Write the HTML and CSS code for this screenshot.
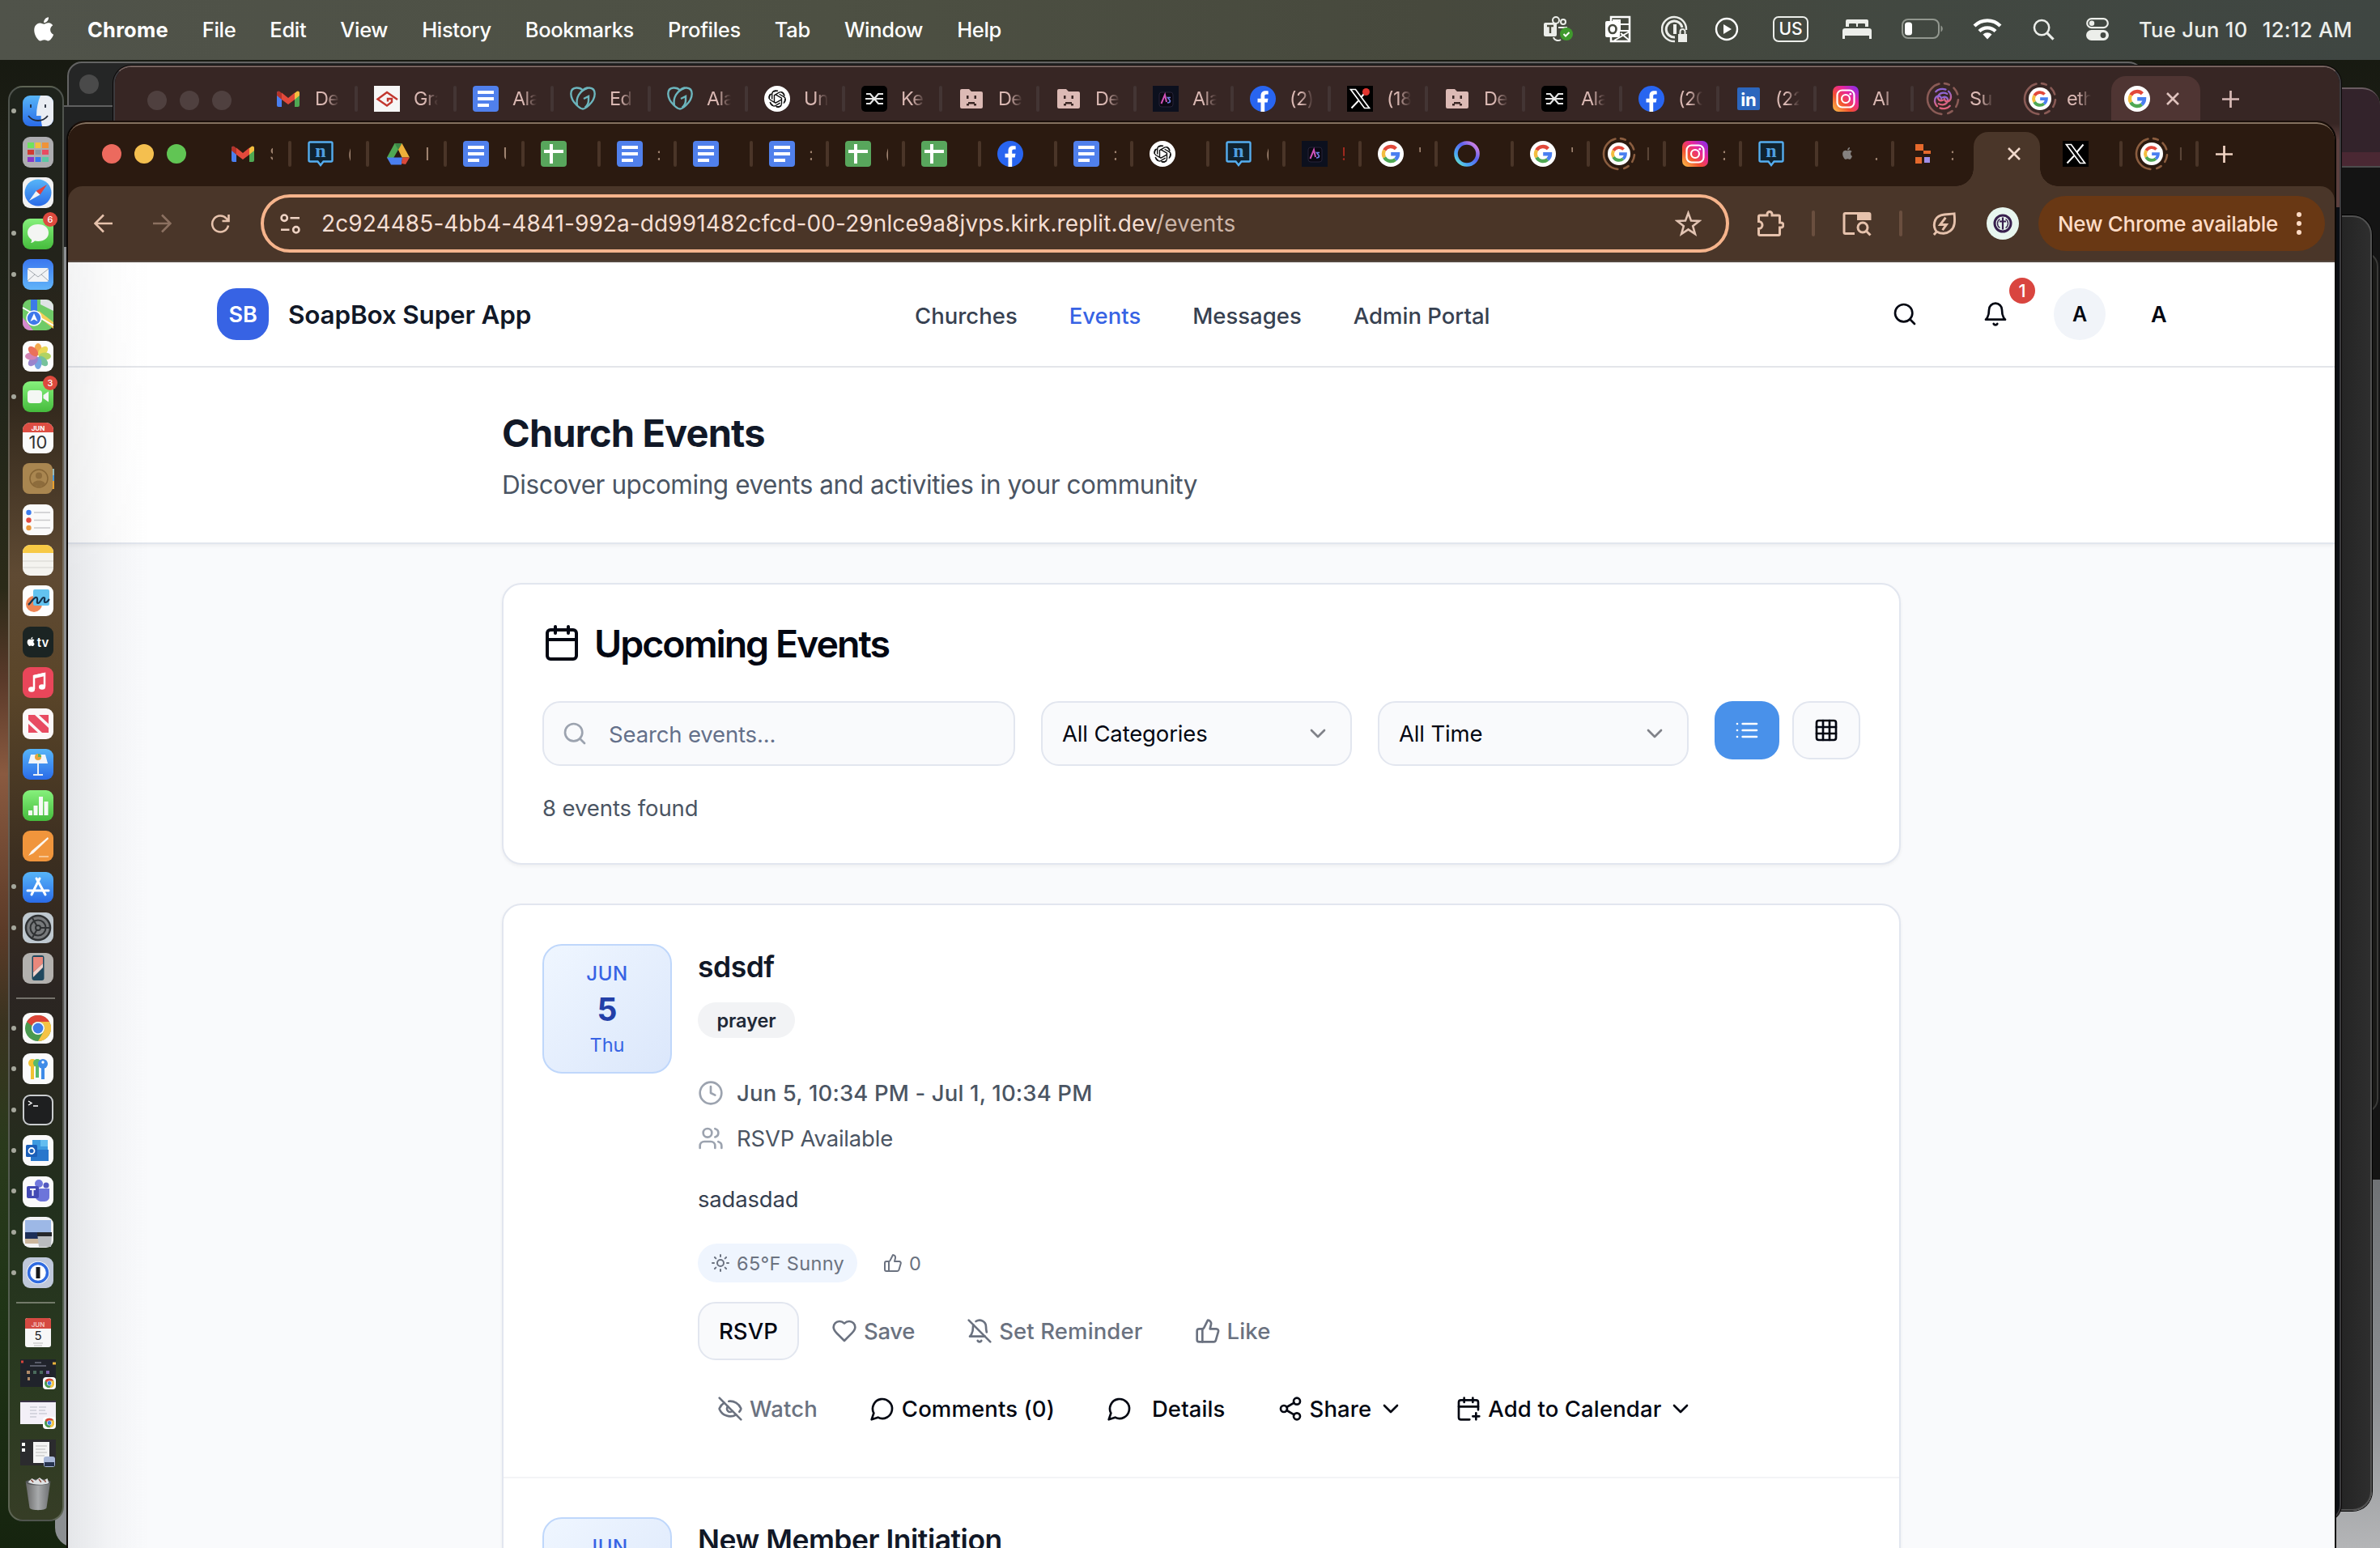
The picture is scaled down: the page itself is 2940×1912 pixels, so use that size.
FILE: index.html
```html
<!DOCTYPE html>
<html lang="en">
<head>
<meta charset="utf-8">
<title>Church Events</title>
<link rel="stylesheet" href="styles.css">
</head>
<body>
<svg class="defs" width="0" height="0">
  <defs>
    <linearGradient id="gInsta" x1="0" y1="1" x2="1" y2="0"><stop offset="0" stop-color="#fdc84b"/><stop offset=".35" stop-color="#f2502f"/><stop offset=".65" stop-color="#e8259c"/><stop offset="1" stop-color="#7b2ff7"/></linearGradient>
    <linearGradient id="gRing" x1="1" y1="0" x2="0" y2="1"><stop offset="0" stop-color="#f58be0"/><stop offset=".4" stop-color="#5a62f0"/><stop offset=".75" stop-color="#4aa8f5"/><stop offset="1" stop-color="#6ff0c0"/></linearGradient>
    <linearGradient id="gSpiral" x1="0" y1="0" x2="0" y2="1"><stop offset="0" stop-color="#8c66d8"/><stop offset="1" stop-color="#e0637a"/></linearGradient>
    <linearGradient id="gGreen" x1="0" y1="0" x2="0" y2="1"><stop offset="0" stop-color="#86f17c"/><stop offset="1" stop-color="#45bb3c"/></linearGradient>
    <linearGradient id="gBlue" x1="0" y1="0" x2="0" y2="1"><stop offset="0" stop-color="#57b5f8"/><stop offset="1" stop-color="#2a6be8"/></linearGradient>
    <linearGradient id="gMail" x1="0" y1="0" x2="0" y2="1"><stop offset="0" stop-color="#3a77f0"/><stop offset="1" stop-color="#62b5f9"/></linearGradient>
    <linearGradient id="gTrash" x1="0" y1="0" x2="1" y2="0"><stop offset="0" stop-color="#666"/><stop offset=".5" stop-color="#a8aaac"/><stop offset="1" stop-color="#6c6e70"/></linearGradient>
  </defs>
  <symbol id="f-gmail" viewBox="0 0 32 32"><path d="M2 7v17a2 2 0 0 0 2 2h4V13z" fill="#4a7ff0"/><path d="M30 7v17a2 2 0 0 1-2 2h-4V13z" fill="#4fa853"/><path d="M24 9l2.500-2c1.500-1.200 3.500-.5 3.500 2v3l-6 5z" fill="#f4bd3f"/><path d="M8 9L5.500 7C4 5.800 2 6.500 2 9v3l6 5z" fill="#b3342b"/><path d="M8 8.500l8 6.500 8-6.500V17l-8 6-8-6z" fill="#e2493b"/></symbol>
  <symbol id="f-nd" viewBox="0 0 32 32"><path d="M3 1.500h26a1.500 1.500 0 0 1 1.500 1.500v21a1.500 1.500 0 0 1-1.500 1.500h-9.500L16 30l-3.500-4.500H3A1.500 1.500 0 0 1 1.500 24V3A1.500 1.500 0 0 1 3 1.500z" fill="#10222e" stroke="#55aef0" stroke-width="2.400"/><text x="16" y="19.500" text-anchor="middle" font-family="Liberation Serif, serif" font-weight="700" font-size="24" fill="#4f9fe0">n</text></symbol>
  <symbol id="f-drive" viewBox="0 0 32 32"><path d="M11.500 3h9L11 19.500 6.500 27 2 20.500z" fill="#4fa853"/><path d="M11.500 3h9L16 11z" fill="#3d8746"/><path d="M20.500 3L30 20.500h-9.500L16 11z" fill="#edb03a"/><path d="M2 20.500h19l-1 9H7z" fill="#4a7ff0"/><path d="M21 20.500h9l-5 8.500-5-1z" fill="#d9493a"/></symbol>
  <symbol id="f-docs" viewBox="0 0 32 32"><rect width="32" height="32" rx="4" fill="#5080ec"/><path d="M6 6h20v4H6zM6 14h20v4H6zM6 22h14v4H6z" fill="#fff"/></symbol>
  <symbol id="f-sheets" viewBox="0 0 32 32"><rect width="32" height="32" rx="4" fill="#58a65c"/><path d="M11 4h4v24h-4zM4 11h24v4H4z" fill="#fff"/></symbol>
  <symbol id="f-fb" viewBox="0 0 32 32"><circle cx="16" cy="16" r="16" fill="#2865f0"/><path d="M13.500 32V20.500H9.500V15.800h4v-3.300c0-4.300 2.200-6.200 6.200-6.200 1.200 0 2.200.1 3 .3v4h-2.200c-1.700 0-2.300.8-2.300 2.400v2.800h4.300l-.8 4.700h-3.500V32z" fill="#fff"/></symbol>
  <symbol id="f-gpt" viewBox="0 0 32 32"><circle cx="16" cy="16" r="16" fill="#fff"/><g fill="none" stroke="#111" stroke-width="1.400"><path id="petal" d="M12.500 20.500v-8.800l6-3.500a4.300 4.300 0 0 1 6.300 4.500M16 6.500a4.300 4.300 0 0 0-6.300 3.300v6.800"/><use href="#petal" transform="rotate(120 16 16)"/><use href="#petal" transform="rotate(240 16 16)"/><circle cx="16" cy="16" r="9.800" stroke-dasharray="6 4.260"/></g></symbol>
  <symbol id="f-as" viewBox="0 0 32 32"><rect width="32" height="32" fill="#0c101e"/><rect x="8" y="8" width="17" height="18" rx="3" fill="#0a0812" stroke="#262338"/><path d="M10.500 22L15 11l2 9" fill="none" stroke="#d052b8" stroke-width="2"/><path d="M22 14.500h-3.500l3 4c0 2-1.500 2.500-3.500 2.500" fill="none" stroke="#6f7de0" stroke-width="1.600"/></symbol>
  <symbol id="f-google" viewBox="0 0 32 32"><circle cx="16" cy="16" r="16" fill="#fff"/><g fill="none" stroke-width="4.400"><path d="M22.400 9.700A9 9 0 0 0 8.200 11.500" stroke="#e2493b"/><path d="M8.200 11.500a9 9 0 0 0 0 9" stroke="#f4bd3f"/><path d="M8.200 20.500a9 9 0 0 0 13.500 2.500" stroke="#4fa853"/><path d="M21.700 23A9 9 0 0 0 25 16.200h-8.800" stroke="#4a7ff0"/></g></symbol>
  <symbol id="f-ring" viewBox="0 0 32 32"><circle cx="16" cy="16" r="13.500" fill="none" stroke="url(#gRing)" stroke-width="4.600"/></symbol>
  <symbol id="f-insta" viewBox="0 0 32 32"><rect width="32" height="32" rx="7" fill="url(#gInsta)"/><rect x="5.500" y="5.500" width="21" height="21" rx="6" fill="none" stroke="#fff" stroke-width="2.200"/><circle cx="16" cy="16" r="5" fill="none" stroke="#fff" stroke-width="2.200"/><circle cx="21.800" cy="10.200" r="1.400" fill="#fff"/></symbol>
  <symbol id="apple" viewBox="0 0 24 24"><path d="M17.050 12.540c-.03-2.600 2.130-3.860 2.230-3.920-1.220-1.780-3.110-2.020-3.780-2.050-1.600-.16-3.140.95-3.950.95-.82 0-2.070-.93-3.410-.9-1.750.02-3.370 1.020-4.270 2.590-1.830 3.160-.47 7.840 1.300 10.400.87 1.260 1.900 2.670 3.260 2.620 1.310-.05 1.800-.85 3.390-.85 1.570 0 2.030.85 3.410.82 1.410-.02 2.300-1.280 3.160-2.540 1-1.460 1.410-2.870 1.430-2.940-.03-.01-2.740-1.050-2.770-4.180zM14.460 4.880c.72-.88 1.210-2.090 1.070-3.310-1.040.05-2.300.7-3.040 1.570-.67.770-1.250 2.010-1.100 3.190 1.160.09 2.350-.59 3.070-1.450z"/></symbol>
  <symbol id="f-apple" viewBox="0 0 32 32"><use href="#apple" x="8" y="7" width="17" height="17" fill="#85817f"/></symbol>
  <symbol id="f-replit" viewBox="0 0 32 32"><path d="M6 4h10v8H6zM16 12h9v4H16zM6 20h8v8H6z" fill="#e5692c"/><path d="M17 20h7v7h-7z" fill="#a08fe8"/></symbol>
  <symbol id="f-x" viewBox="0 0 32 32"><rect width="32" height="32" fill="#000"/><path d="M4.500 4.500h6L27.500 27.500h-6z" fill="none" stroke="#fff" stroke-width="1.700"/><path d="M25.500 4.500L17.500 14M14 18.500L5.500 27.500" stroke="#fff" stroke-width="2"/></symbol>
  <symbol id="f-gr" viewBox="0 0 32 32"><rect width="32" height="32" fill="#f6f6f6"/><path d="M29 17L16 8 4.500 16.500 16 24.500l6-4.500v-4h-5v3.500" fill="none" stroke="#c2372f" stroke-width="2.400"/></symbol>
  <symbol id="f-gd" viewBox="0 0 32 32"><g fill="none" stroke="#6cb5bd" stroke-width="2.400"><path d="M8.500 24C-1 15-1 3 8 2.500c5-.3 8 3 8 3s3-3.300 8-3C33 3 33 15 23.500 24c-2.500 2.400-5 4.500-7.500 4.500s-5-2.100-7.500-4.500z"/><path d="M22 2.500C12 6 7 15 9 24"/><path d="M17 16l6-3v5c0 4-2 7-4.500 9"/></g></symbol>
  <symbol id="f-ke" viewBox="0 0 32 32"><rect width="32" height="32" rx="5" fill="#000"/><path d="M6 10h5l5 6 5-6h6M6 22h5l5-6 5 6h6M5 16h22" fill="none" stroke="#e6e6e6" stroke-width="2.200"/></symbol>
  <symbol id="f-sad" viewBox="0 0 32 32"><path d="M4 4h9l3 3h12a2 2 0 0 1 2 2v17a2 2 0 0 1-2 2H4a2 2 0 0 1-2-2V6a2 2 0 0 1 2-2z" fill="#dcbab5"/><path d="M10 12h2.500v4H10zM19.500 12H22v4h-2.500zM12 20h8v2.500h-8zM10 22h3v2.500h-3zM19 22h3v2.500h-3z" fill="#3a2725"/></symbol>
  <symbol id="f-in" viewBox="0 0 32 32"><rect x="2" y="2" width="28" height="28" rx="2" fill="#2c66bd"/><text x="16" y="25" text-anchor="middle" font-family="Inter, sans-serif" font-weight="700" font-size="22" fill="#fff">in</text></symbol>
  <symbol id="f-spiral" viewBox="0 0 32 32"><g fill="none" stroke="url(#gSpiral)" stroke-width="2.600" stroke-linecap="round"><path d="M16 14c5-2 8 2 6.500 6-2 4.500-8 5.500-12.500 3"/><path d="M16 18c-5 2-8-2-6.500-6 2-4.500 8-5.500 12.500-3"/><path d="M14 16c-1-5-7-5-9 0-1 3.500.5 8 3 10.500"/><path d="M18 16c1 5 7 5 9 0 1-3.500-.5-8-3-10.500"/><path d="M12 29c5 2 11 .5 14-3M20 3c-5-2-11-.5-14 3"/></g></symbol>
  <symbol id="dashring" viewBox="0 0 42 42"><circle cx="21" cy="21" r="19" fill="none" stroke="currentColor" stroke-width="2.600" stroke-linecap="round" stroke-dasharray="6 7 9 7 9 7 6 8 53 7.400" transform="rotate(-84 21 21)"/></symbol>

  <symbol id="search" viewBox="0 0 24 24"><circle cx="11" cy="11" r="8"/><path d="m21 21-4.300-4.300"/></symbol>
  <symbol id="bell" viewBox="0 0 24 24"><path d="M6 8a6 6 0 0 1 12 0c0 7 3 9 3 9H3s3-2 3-9"/><path d="M10.300 21a1.940 1.940 0 0 0 3.400 0"/></symbol>
  <symbol id="belloff" viewBox="0 0 24 24"><path d="M8.700 3A6 6 0 0 1 18 8a21.300 21.300 0 0 0 .6 5"/><path d="M17 17H3s3-2 3-9a4.670 4.670 0 0 1 .3-1.700"/><path d="M10.300 21a1.940 1.940 0 0 0 3.400 0"/><path d="m2 2 20 20"/></symbol>
  <symbol id="calendar" viewBox="0 0 24 24"><path d="M8 2v4M16 2v4"/><rect width="18" height="18" x="3" y="4" rx="2"/><path d="M3 10h18"/></symbol>
  <symbol id="calplus" viewBox="0 0 24 24"><path d="M8 2v4M16 2v4"/><path d="M21 13V6a2 2 0 0 0-2-2H5a2 2 0 0 0-2 2v14a2 2 0 0 0 2 2h8"/><path d="M3 10h18M16 19h6M19 16v6"/></symbol>
  <symbol id="chev" viewBox="0 0 24 24"><path d="m6 9 6 6 6-6"/></symbol>
  <symbol id="list" viewBox="0 0 24 24"><path d="M3 12h.01M3 18h.01M3 6h.01M8 12h13M8 18h13M8 6h13"/></symbol>
  <symbol id="grid" viewBox="0 0 24 24"><rect width="18" height="18" x="3" y="3" rx="2"/><path d="M3 9h18M3 15h18M9 3v18M15 3v18"/></symbol>
  <symbol id="clock" viewBox="0 0 24 24"><circle cx="12" cy="12" r="10"/><path d="M12 6v6l4 2"/></symbol>
  <symbol id="users" viewBox="0 0 24 24"><path d="M16 21v-2a4 4 0 0 0-4-4H6a4 4 0 0 0-4 4v2"/><circle cx="9" cy="7" r="4"/><path d="M22 21v-2a4 4 0 0 0-3-3.870M16 3.130a4 4 0 0 1 0 7.750"/></symbol>
  <symbol id="sun" viewBox="0 0 24 24"><circle cx="12" cy="12" r="4"/><path d="M12 2v2M12 20v2m-7.070-17.070 1.410 1.410m11.320 11.320 1.410 1.410M2 12h2M20 12h2m-15.660 5.660-1.410 1.410M19.070 4.930l-1.410 1.410"/></symbol>
  <symbol id="thumb" viewBox="0 0 24 24"><path d="M7 10v12"/><path d="M15 5.880 14 10h5.830a2 2 0 0 1 1.920 2.560l-2.330 8A2 2 0 0 1 17.500 22H4a2 2 0 0 1-2-2v-8a2 2 0 0 1 2-2h2.760a2 2 0 0 0 1.790-1.110L12 2a3.130 3.130 0 0 1 3 3.880Z"/></symbol>
  <symbol id="heart" viewBox="0 0 24 24"><path d="M19 14c1.490-1.460 3-3.210 3-5.500A5.500 5.500 0 0 0 16.500 3c-1.760 0-3 .5-4.500 2-1.500-1.500-2.740-2-4.500-2A5.500 5.500 0 0 0 2 8.500c0 2.300 1.500 4.050 3 5.500l7 7Z"/></symbol>
  <symbol id="eyeoff" viewBox="0 0 24 24"><path d="M10.733 5.076a10.744 10.744 0 0 1 11.205 6.575 1 1 0 0 1 0 .696 10.747 10.747 0 0 1-1.444 2.490"/><path d="M14.084 14.158a3 3 0 0 1-4.242-4.242"/><path d="M17.479 17.499a10.750 10.750 0 0 1-15.417-5.151 1 1 0 0 1 0-.696 10.750 10.750 0 0 1 4.446-5.143"/><path d="m2 2 20 20"/></symbol>
  <symbol id="comment" viewBox="0 0 24 24"><path d="M7.900 20A9 9 0 1 0 4 16.100L2 22Z"/></symbol>
  <symbol id="share" viewBox="0 0 24 24"><circle cx="18" cy="5" r="3"/><circle cx="6" cy="12" r="3"/><circle cx="18" cy="19" r="3"/><path d="m8.590 13.510 6.830 3.980M15.410 6.510l-6.820 3.980"/></symbol>
  <symbol id="chromelogo" viewBox="0 0 32 32"><circle cx="16" cy="16" r="16" fill="#4a9a50"/><path d="M2.100 8a16 16 0 0 1 27.800 0H16a8 8 0 0 0-7.500 5z" fill="#dc4437"/><path d="M29.900 8A16 16 0 0 1 16 32l7-12a8 8 0 0 0-7-12z" fill="#f6c344"/><circle cx="16" cy="16" r="8" fill="#fff"/><circle cx="16" cy="16" r="6.400" fill="#3f7de8"/></symbol>
</svg>

<div class="desktop">
  <!-- windows stacked behind the active one -->
  <div class="win w-plum"><i></i></div>
  <div class="win w-black"></div>
  <div class="win w-silver"></div>
  <div class="win w-edge"></div>
  <div class="win w-char"></div>
  <div class="win w-grayleft"></div>
  <div class="win w-dark1"><i class="dim"></i></div>
  <div class="win w-dark2"></div>

  <div class="win back">
    <div class="tabstrip backstrip">
      <div class="lights dimlights"><i></i><i></i><i></i></div>
      <div class="bt wide"><svg><use href="#f-gmail"/></svg><span>De</span></div>
      <div class="bt wide"><svg><use href="#f-gr"/></svg><span>Gra</span></div>
      <div class="bt"><svg><use href="#f-docs"/></svg><span>Ala</span></div>
      <div class="bt"><svg><use href="#f-gd"/></svg><span>Ed</span></div>
      <div class="bt"><svg><use href="#f-gd"/></svg><span>Ala</span></div>
      <div class="bt"><svg><use href="#f-gpt"/></svg><span>Un</span></div>
      <div class="bt"><svg><use href="#f-ke"/></svg><span>Ke</span></div>
      <div class="bt"><svg><use href="#f-sad"/></svg><span>De</span></div>
      <div class="bt"><svg><use href="#f-sad"/></svg><span>De</span></div>
      <div class="bt"><svg><use href="#f-as"/></svg><span>Ala</span></div>
      <div class="bt"><svg><use href="#f-fb"/></svg><span>(2)</span></div>
      <div class="bt"><svg><use href="#f-x"/></svg><span>(18</span><b class="reddot"></b></div>
      <div class="bt"><svg><use href="#f-sad"/></svg><span>De</span></div>
      <div class="bt"><svg><use href="#f-ke"/></svg><span>Ala</span></div>
      <div class="bt"><svg><use href="#f-fb"/></svg><span>(20</span></div>
      <div class="bt"><svg><use href="#f-in"/></svg><span>(22</span></div>
      <div class="bt"><svg><use href="#f-insta"/></svg><span>AI</span></div>
      <div class="bt nosep"><svg class="inner"><use href="#f-spiral"/></svg><svg class="dash"><use href="#dashring"/></svg><span>Su</span></div>
      <div class="bt nosep"><svg class="inner"><use href="#f-google"/></svg><svg class="dash"><use href="#dashring"/></svg><span>eth</span></div>
      <div class="bactive"><svg class="fav"><use href="#f-google"/></svg><svg class="x" viewBox="0 0 16 16"><path d="M1 1l14 14M15 1L1 15"/></svg></div>
      <svg class="plus" viewBox="0 0 20 20"><path d="M10 0v20M0 10h20"/></svg>
    </div>
  </div>

  <div class="win front">
    <div class="tabstrip frontstrip">
      <div class="lights"><i class="r"></i><i class="y"></i><i class="g"></i></div>
      <div class="ft wide"><svg><use href="#f-gmail"/></svg><span>S</span></div>
      <div class="ft wide"><svg><use href="#f-nd"/></svg><span>(</span></div>
      <div class="ft wide"><svg><use href="#f-drive"/></svg><span>I</span></div>
      <div class="ft wide"><svg><use href="#f-docs"/></svg><span>U</span></div>
      <div class="ft"><svg><use href="#f-sheets"/></svg></div>
      <div class="ft"><svg><use href="#f-docs"/></svg><span>:</span></div>
      <div class="ft"><svg><use href="#f-docs"/></svg></div>
      <div class="ft"><svg><use href="#f-docs"/></svg><span>:</span></div>
      <div class="ft"><svg><use href="#f-sheets"/></svg><span>(</span></div>
      <div class="ft"><svg><use href="#f-sheets"/></svg></div>
      <div class="ft"><svg><use href="#f-fb"/></svg></div>
      <div class="ft"><svg><use href="#f-docs"/></svg><span>:</span></div>
      <div class="ft"><svg><use href="#f-gpt"/></svg></div>
      <div class="ft"><svg><use href="#f-nd"/></svg><span>(</span></div>
      <div class="ft"><svg><use href="#f-as"/></svg><span class="red">!</span></div>
      <div class="ft"><svg><use href="#f-google"/></svg><span>'</span></div>
      <div class="ft"><svg><use href="#f-ring"/></svg></div>
      <div class="ft"><svg><use href="#f-google"/></svg><span>'</span></div>
      <div class="ft"><svg class="inner"><use href="#f-google"/></svg><svg class="dash"><use href="#dashring"/></svg><span class="faint">I</span></div>
      <div class="ft"><svg><use href="#f-insta"/></svg><span>:</span></div>
      <div class="ft"><svg><use href="#f-nd"/></svg></div>
      <div class="ft"><svg><use href="#f-apple"/></svg><span>.</span></div>
      <div class="ft nosep"><svg><use href="#f-replit"/></svg><span>:</span></div>
      <div class="factive"><svg class="x" viewBox="0 0 16 16"><path d="M1 1l14 14M15 1L1 15"/></svg></div>
      <div class="ft"><svg><use href="#f-x"/></svg></div>
      <div class="ft"><svg class="inner"><use href="#f-google"/></svg><svg class="dash"><use href="#dashring"/></svg><span class="faint">I</span></div>
      <svg class="plus" viewBox="0 0 20 20"><path d="M10 0v20M0 10h20"/></svg>
    </div>

    <div class="toolbar">
      <div class="navbtns">
        <svg viewBox="0 0 24 24"><path d="M23 12H2M12 1.500L1.500 12 12 22.500"/></svg>
        <svg viewBox="0 0 24 24" class="off"><path d="M1 12h21M12 1.500L22.500 12 12 22.500"/></svg>
        <svg viewBox="0 0 24 24"><path d="M22 14.500a10 10 0 1 1-2.200-8.500L22 8.500M22.500 1v8h-8"/></svg>
      </div>
      <div class="omnibox">
        <svg class="tune" viewBox="0 0 24 24"><circle cx="5" cy="5" r="3.500"/><path d="M12 5h11M1 19h10"/><circle cx="19" cy="19" r="3.500"/></svg>
        <span class="url">2c924485-4bb4-4841-992a-dd991482cfcd-00-29nlce9a8jvps.kirk.replit.dev<em>/events</em></span>
        <svg class="star" viewBox="0 0 32 32"><path d="M16 3l3.400 9.200 9.800.4-7.700 6.100 2.700 9.500L16 22.700l-8.200 5.500 2.700-9.500-7.700-6.100 9.800-.4z"/></svg>
      </div>
      <div class="tools">
        <svg class="t-puz" viewBox="0 0 34 34"><path d="M4 7h9V5.500a3 3 0 0 1 6 0V7h8a1.500 1.500 0 0 1 1.500 1.500V16h1.500a3 3 0 0 1 0 6h-1.500v8a1.500 1.500 0 0 1-1.500 1.500H4A1.500 1.500 0 0 1 2.500 30v-6.500a4.500 4.500 0 0 0 0-9v-6A1.500 1.500 0 0 1 4 7z"/></svg>
        <i class="tsep"></i>
        <svg class="t-lens" viewBox="0 0 36 32"><path d="M15 28.500H3.500A1.500 1.500 0 0 1 2 27V5a1.500 1.500 0 0 1 1.500-1.500h29A1.500 1.500 0 0 1 34 5v7"/><path d="M18 3.500h15.500V12H18z" class="fill"/><circle cx="25" cy="21" r="6"/><path d="M29.500 25.500l5 5"/></svg>
        <i class="tsep"></i>
        <svg class="t-leaf" viewBox="0 0 32 32"><path d="M3 30l3.500-4C1 19 3 8 12 5c6-2 12-1 17-2 1 10 1 17-5 22-5 4-12 4-17 1"/><path d="M18 8l-7 9h8l-5 7"/></svg>
        <svg class="avatar" viewBox="0 0 40 40"><circle cx="20" cy="20" r="20" fill="#e8f6ef"/><circle cx="20" cy="20" r="10" fill="none" stroke="#38204e" stroke-width="3"/><path d="M20 12.500v15M16 17.500h8" stroke="#38204e" stroke-width="2.200"/><path d="M16.500 14.500a6.500 6.500 0 0 0 0 11M23.500 14.500a6.500 6.500 0 0 1 0 11" fill="none" stroke="#38204e" stroke-width="1.400"/></svg>
        <div class="update"><span>New Chrome available</span><i class="kebab"><b></b><b></b><b></b></i></div>
      </div>
    </div>

    <div class="page">
      <nav class="nav">
        <div class="brand"><div class="logo">SB</div><span>SoapBox Super App</span></div>
        <div class="links"><a>Churches</a><a class="on">Events</a><a>Messages</a><a>Admin Portal</a></div>
        <div class="actions">
          <svg class="ic"><use href="#search"/></svg>
          <div class="bell"><svg class="ic"><use href="#bell"/></svg><b>1</b></div>
          <div class="av">A</div>
          <div class="av2">A</div>
        </div>
      </nav>
      <header class="hero"><div class="wrap"><h1>Church Events</h1><p>Discover upcoming events and activities in your community</p></div></header>
      <main class="wrap main">
        <section class="card filter">
          <h2><svg class="ic big"><use href="#calendar"/></svg><span>Upcoming Events</span></h2>
          <div class="filters">
            <div class="input"><svg class="ic"><use href="#search"/></svg><span>Search events...</span></div>
            <div class="select"><span>All Categories</span><svg class="ic"><use href="#chev"/></svg></div>
            <div class="select"><span>All Time</span><svg class="ic"><use href="#chev"/></svg></div>
            <div class="views"><div class="vlist"><svg class="ic"><use href="#list"/></svg></div><div class="vgrid"><svg class="ic"><use href="#grid"/></svg></div></div>
          </div>
          <p class="found">8 events found</p>
        </section>
        <section class="card events">
          <article class="event">
            <div class="date"><span class="mon">JUN</span><b>5</b><span class="dow">Thu</span></div>
            <div class="body">
              <h3>sdsdf</h3>
              <span class="tag">prayer</span>
              <div class="meta time"><svg class="ic"><use href="#clock"/></svg><span>Jun 5, 10:34 PM - Jul 1, 10:34 PM</span></div>
              <div class="meta"><svg class="ic"><use href="#users"/></svg><span>RSVP Available</span></div>
              <p class="desc">sadasdad</p>
              <div class="stats"><span class="pill"><svg class="ic sm"><use href="#sun"/></svg><span>65°F Sunny</span></span><span class="likes"><svg class="ic sm"><use href="#thumb"/></svg>0</span></div>
              <div class="btns">
                <button class="outline">RSVP</button>
                <button class="mute"><svg class="ic"><use href="#heart"/></svg><span class="save">Save</span></button>
                <button class="mute"><svg class="ic"><use href="#belloff"/></svg><span>Set Reminder</span></button>
                <button class="mute"><svg class="ic"><use href="#thumb"/></svg><span>Like</span></button>
              </div>
              <div class="btns second">
                <button class="mute"><svg class="ic"><use href="#eyeoff"/></svg><span>Watch</span></button>
                <button><svg class="ic"><use href="#comment"/></svg><span>Comments (0)</span></button>
                <button class="details"><svg class="ic"><use href="#comment"/></svg><span>Details</span></button>
                <button><svg class="ic"><use href="#share"/></svg><span>Share</span><svg class="ic"><use href="#chev"/></svg></button>
                <button><svg class="ic"><use href="#calplus"/></svg><span>Add to Calendar</span><svg class="ic"><use href="#chev"/></svg></button>
              </div>
            </div>
          </article>
          <article class="event">
            <div class="date"><span class="mon">JUN</span><b>8</b><span class="dow">Sun</span></div>
            <div class="body"><h3>New Member Initiation</h3></div>
          </article>
        </section>
      </main>
      <div class="dockshade"></div>
    </div>
  </div>

  <div class="menubar">
    <svg class="apple"><use href="#apple"/></svg>
    <div class="menus"><b>Chrome</b><span>File</span><span>Edit</span><span>View</span><span>History</span><span>Bookmarks</span><span>Profiles</span><span>Tab</span><span>Window</span><span>Help</span></div>
    <div class="status">
      <svg class="s1" viewBox="0 0 36 32"><rect x="0" y="8" width="16" height="17" rx="2" fill="#eceeea"/><path d="M4 12h8M8 12v9" stroke="#4a4b3d" stroke-width="2.400"/><g fill="none" stroke="#eceeea" stroke-width="2"><circle cx="15" cy="5" r="4"/><circle cx="24" cy="7" r="3"/><path d="M18 14h10v6M12 26c1 4 6 5 9 3"/></g><circle cx="28" cy="22" r="8" fill="#3f9a2d"/><path d="M24.500 22l2.500 2.500 4.500-4.500" fill="none" stroke="#fff" stroke-width="2"/></svg>
      <svg class="s2" viewBox="0 0 34 34"><rect x="8" y="2" width="23" height="30" fill="none" stroke="#fff" stroke-width="2.500"/><path d="M10 6h9v5h12M19 11v8h12M12 31l19-11M20 22l11 9" stroke="#fff" stroke-width="2" fill="none"/><rect x="1" y="7" width="18" height="20" rx="2" fill="#fff"/><ellipse cx="10" cy="17" rx="4.500" ry="5" fill="none" stroke="#46493f" stroke-width="2.600"/></svg>
      <svg class="s3" viewBox="0 0 34 34"><g fill="none" stroke="#eceeea" stroke-width="2.400"><path d="M31 18A15 15 0 1 0 17 32"/><path d="M26 15A10 10 0 1 0 17 27" stroke-width="3"/></g><path d="M15 11h4v12h-4zM21 23h11v10H21z" fill="#eceeea"/><path d="M23.500 23v-3a3 3 0 0 1 6 0v3" fill="none" stroke="#eceeea" stroke-width="2"/></svg>
      <svg class="s4" viewBox="0 0 30 30"><circle cx="15" cy="15" r="13" fill="none" stroke="#fff" stroke-width="2.400"/><path d="M11 9l10 6-10 6z" fill="#fff"/></svg>
      <div class="us">US</div>
      <svg class="s5" viewBox="0 0 36 26"><path d="M4 10V3a2 2 0 0 1 2-2h24a2 2 0 0 1 2 2v7h-4V7a1 1 0 0 0-1-1h-7a1 1 0 0 0-1 1v3h-2V7a1 1 0 0 0-1-1H9a1 1 0 0 0-1 1v3zM3 12h30a3 3 0 0 1 3 3v10h-3v-4H3v4H0V15a3 3 0 0 1 3-3z" fill="#eceeea"/></svg>
      <svg class="s6" viewBox="0 0 52 26"><rect x="1" y="1" width="45" height="23" rx="7" fill="none" stroke="#92978f" stroke-width="2"/><rect x="4" y="4.500" width="9" height="16" rx="3.500" fill="#fff"/><path d="M48.500 8.500c3 1.500 3 6.500 0 8z" fill="#92978f"/></svg>
      <svg class="s7" viewBox="0 0 36 26"><g fill="none" stroke="#fff" stroke-width="4.200"><path d="M2 9a22.500 22.500 0 0 1 32 0"/><path d="M8 15.500a14 14 0 0 1 20 0"/></g><path d="M18 25.500l-5.500-6a8 8 0 0 1 11 0z" fill="#fff"/></svg>
      <svg class="s8" viewBox="0 0 28 28"><g fill="none" stroke="#eceeea" stroke-width="2.600"><circle cx="11.500" cy="11.500" r="9.500"/><path d="M18.500 18.500L26.500 26.500" stroke-width="3.200"/></g></svg>
      <svg class="s9" viewBox="0 0 28 28"><rect x="1.200" y="1.200" width="25.600" height="11" rx="5.500" fill="none" stroke="#eceeea" stroke-width="2.200"/><circle cx="7" cy="6.700" r="3.200" fill="#eceeea"/><rect y="15" width="28" height="13" rx="6.500" fill="#eceeea"/><circle cx="21" cy="21.500" r="3.400" fill="#434842"/></svg>
      <span class="clock"><span>Tue Jun 10</span><span>12:12 AM</span></span>
    </div>
  </div>

  <div class="dock">
    <div class="d run"><svg viewBox="0 0 38 38"><rect width="38" height="38" rx="9" fill="url(#gBlue)"/><path d="M22 0h7a9 9 0 0 1 9 9v20a9 9 0 0 1-9 9h-5c-1-5-1.500-9-1.300-13H17c0-9 2-18 5-25z" fill="#e9edf3"/><path d="M10 11v4M28 11v4M7 25c6 8 18 8 24 0" fill="none" stroke="#222a38" stroke-width="1.800"/></svg></div>
    <div class="d"><svg viewBox="0 0 38 38"><rect width="38" height="38" rx="9" fill="#adadb0"/><path d="M6 7h8v7H6z" fill="#6ee35c"/><path d="M15.500 7h7v7h-7z" fill="#f3c03d"/><path d="M24 7h8v7h-8z" fill="#ef9339"/><path d="M6 16h8v6H6z" fill="#d13b31"/><path d="M15.500 16h7v6h-7z" fill="#8b97a3"/><path d="M24 16h8v6h-8z" fill="#ea4b61"/><path d="M6 25h8v6H6z" fill="#8938c8"/><path d="M15.500 25h7v6h-7z" fill="#3377ee"/><path d="M24 25h8v6h-8z" fill="#5cc9a4"/></svg></div>
    <div class="d"><svg viewBox="0 0 38 38"><rect width="38" height="38" rx="9" fill="#f1f1f2"/><circle cx="19" cy="19" r="16.500" fill="url(#gBlue)"/><path d="M30 9L21.500 21.500 16.500 17z" fill="#e3413a"/><path d="M8 29l8.500-12 5 4.500z" fill="#f4f4f4"/></svg></div>
    <div class="d run"><svg viewBox="0 0 38 38"><rect width="38" height="38" rx="9" fill="url(#gGreen)"/><path d="M19 7c8 0 13 4.500 13 10.500S27 28 19 28c-1.500 0-3-.2-4-.5-1.500 1.500-3 2.300-5 2.500 1-1.200 1.300-2.500 1-4-3-2-5-5-5-8.500C6 11.500 11 7 19 7z" fill="#f3f5f3"/></svg><b>6</b></div>
    <div class="d run"><svg viewBox="0 0 38 38"><rect width="38" height="38" rx="9" fill="url(#gMail)"/><rect x="6" y="11" width="26" height="17" rx="2" fill="#f1f3f5"/><path d="M6 12l13 10 13-10M6 27l9-8M32 27l-9-8" fill="none" stroke="#a3a9b0"/></svg></div>
    <div class="d"><svg viewBox="0 0 38 38"><rect width="38" height="38" rx="9" fill="#6fcb68"/><path d="M22 0h7a9 9 0 0 1 9 9v5L22 6z" fill="#dfe3e5"/><path d="M0 22v7a9 9 0 0 0 9 9h4z" fill="#d689cf"/><path d="M10 0h8v18h-8z" fill="#3c7ae8"/><path d="M20 14l18 14v8L18 20z" fill="#f4d05a"/><path d="M0 10l38 22" stroke="#fff" stroke-width="2"/><circle cx="14" cy="23" r="9" fill="#3f78ea" stroke="#fff" stroke-width="1.500"/><path d="M14 17l4.500 10-4.500-2.500L9.500 27z" fill="#fff"/></svg></div>
    <div class="d"><svg viewBox="0 0 38 38"><rect width="38" height="38" rx="9" fill="#fcfcfc"/><g opacity=".85"><ellipse cx="19" cy="10.500" rx="4.500" ry="7.500" fill="#f29b2f"/><ellipse cx="19" cy="10.500" rx="4.500" ry="7.500" fill="#e8d33a" transform="rotate(45 19 19)"/><ellipse cx="19" cy="10.500" rx="4.500" ry="7.500" fill="#a4cc48" transform="rotate(90 19 19)"/><ellipse cx="19" cy="10.500" rx="4.500" ry="7.500" fill="#5fb98b" transform="rotate(135 19 19)"/><ellipse cx="19" cy="10.500" rx="4.500" ry="7.500" fill="#5e97dc" transform="rotate(180 19 19)"/><ellipse cx="19" cy="10.500" rx="4.500" ry="7.500" fill="#8a70c4" transform="rotate(225 19 19)"/><ellipse cx="19" cy="10.500" rx="4.500" ry="7.500" fill="#cc6fa8" transform="rotate(270 19 19)"/><ellipse cx="19" cy="10.500" rx="4.500" ry="7.500" fill="#e8593e" transform="rotate(315 19 19)"/></g></svg></div>
    <div class="d run"><svg viewBox="0 0 38 38"><rect width="38" height="38" rx="9" fill="url(#gGreen)"/><rect x="6" y="11" width="18" height="16" rx="4" fill="#f4f7f4"/><path d="M25.500 17l6.500-4.500v13L25.500 21z" fill="#f4f7f4"/></svg><b>3</b></div>
    <div class="d"><svg viewBox="0 0 38 38"><rect width="38" height="38" rx="9" fill="#fafafa"/><path d="M9 0h20a9 9 0 0 1 9 9v3H0V9a9 9 0 0 1 9-9z" fill="#dd4d42"/><text x="19" y="9.500" text-anchor="middle" class="dt" font-size="8" font-weight="700" fill="#fff">JUN</text><text x="19" y="32" text-anchor="middle" class="dt" font-size="22" fill="#333">10</text></svg></div>
    <div class="d"><svg viewBox="0 0 38 38"><path d="M30 7h9v8h-9z" fill="#9bb"/><path d="M30 15h9v7h-9z" fill="#4a9be0"/><path d="M30 22h9v10h-9z" fill="#e8a030"/><rect width="37" height="38" rx="8" fill="#a98650"/><circle cx="20" cy="19" r="11" fill="none" stroke="#866535" stroke-width="1.500"/><circle cx="20" cy="15.500" r="4" fill="#8d6c3c"/><path d="M12 26c2-6 14-6 16 0-4 4-12 4-16 0z" fill="#8d6c3c"/></svg></div>
    <div class="d"><svg viewBox="0 0 38 38"><rect width="38" height="38" rx="9" fill="#fafafa"/><circle cx="7.500" cy="10" r="3.200" fill="#3b7cf0"/><circle cx="7.500" cy="19.500" r="3.200" fill="#e2493f"/><circle cx="7.500" cy="29" r="3.200" fill="#e9973a"/><path d="M14 10h20M14 19.500h20M14 29h20" stroke="#c9c9cb" stroke-width="1.300"/></svg></div>
    <div class="d"><svg viewBox="0 0 38 38"><rect width="38" height="38" rx="9" fill="#f4f3ef"/><path d="M9 0h20a9 9 0 0 1 9 9v1H0V9a9 9 0 0 1 9-9z" fill="#f7c945"/><path d="M0 20h38M0 28h38" stroke="#d6d5d0"/></svg></div>
    <div class="d"><svg viewBox="0 0 38 38"><rect width="38" height="38" rx="9" fill="#fdfdfd"/><circle cx="14" cy="23" r="10" fill="#ee8454"/><rect x="13" y="5" width="20" height="20" rx="2" fill="#63c3f0"/><path d="M7 24c4-3 7-10 10-9s-1 7 2 7 4-7 7-7-1 6 2 6 3-2 5-4" fill="none" stroke="#16344f" stroke-width="2.200"/></svg></div>
    <div class="d"><svg viewBox="0 0 38 38"><rect width="38" height="38" rx="9" fill="#1b2423"/><use href="#apple" x="4" y="12" width="13" height="13" fill="#fff"/><text x="25" y="24.500" text-anchor="middle" class="dt" font-size="15" font-weight="600" fill="#fff">tv</text></svg></div>
    <div class="d"><svg viewBox="0 0 38 38"><rect width="38" height="38" rx="9" fill="#e9465a"/><path d="M14 27V11l13-3v16" fill="none" stroke="#fff" stroke-width="2.500"/><path d="M14 12l13-3" stroke="#fff" stroke-width="4"/><ellipse cx="11" cy="27.500" rx="4" ry="3.200" fill="#fff"/><ellipse cx="24" cy="24.500" rx="4" ry="3.200" fill="#fff"/></svg></div>
    <div class="d"><svg viewBox="0 0 38 38"><rect width="38" height="38" rx="9" fill="#fbf7f8"/><path d="M7 8h8l17 16v6h-8L7 14zM20 8h12v11zM7 19l12 11H7z" fill="#e84b62"/></svg></div>
    <div class="d"><svg viewBox="0 0 38 38"><rect width="38" height="38" rx="9" fill="url(#gBlue)"/><path d="M10 7h18l3 11H7z" fill="#f1f5f9"/><circle cx="19" cy="10" r="4" fill="#e8a43c"/><path d="M19 6v4h4a4 4 0 0 0-4-4z" fill="#5ab65c"/><path d="M19 18v13M13 32h12" stroke="#e9eff7" stroke-width="2"/></svg></div>
    <div class="d"><svg viewBox="0 0 38 38"><rect width="38" height="38" rx="9" fill="url(#gGreen)"/><path d="M7 25h5v6H7zM13.500 19h5v12h-5zM20 8h5v23h-5zM26.500 14h5v17h-5z" fill="#f6faf5"/></svg></div>
    <div class="d"><svg viewBox="0 0 38 38"><rect width="38" height="38" rx="9" fill="#f0953c"/><path d="M7 31L11 25 31 8l1 2-19 18z" fill="#fbf6ef"/><path d="M20 32h12" stroke="#fbe0c0" stroke-width="1.300"/></svg></div>
    <div class="d run"><svg viewBox="0 0 38 38"><rect width="38" height="38" rx="9" fill="url(#gBlue)"/><path d="M21 8L11 28M17 8l11 20M6 23h18M27 23h5" fill="none" stroke="#fff" stroke-width="3" stroke-linecap="round"/></svg></div>
    <div class="d run"><svg viewBox="0 0 38 38"><rect width="38" height="38" rx="9" fill="#bfc8cf"/><circle cx="19" cy="19" r="15" fill="#77797b" stroke="#2f3133" stroke-width="2.500"/><circle cx="19" cy="19" r="9.500" fill="none" stroke="#2f3133" stroke-width="2"/><circle cx="19" cy="19" r="3" fill="none" stroke="#2f3133" stroke-width="2"/><path d="M22 19h11M17.500 16.500L12 7M17.500 21.500L12 31" stroke="#2f3133" stroke-width="2"/></svg></div>
    <div class="d"><svg viewBox="0 0 38 38"><rect width="38" height="38" rx="9" fill="#b3b1ae"/><rect x="11.500" y="3" width="15" height="31" rx="3" fill="#20485e"/><path d="M13 5h12v8L13 24z" fill="#e9887c"/><path d="M13 24l12-11v5L13 30z" fill="#f3d3cc"/></svg></div>
    <hr>
    <div class="d run"><svg viewBox="0 0 38 38"><rect width="38" height="38" rx="9" fill="#fafafa"/><use href="#chromelogo" x="3" y="3" width="32" height="32"/></svg></div>
    <div class="d run"><svg viewBox="0 0 38 38"><rect width="38" height="38" rx="9" fill="#fafafa"/><circle cx="12" cy="12" r="5" fill="#f1c232"/><path d="M10 14h4v18h-4z" fill="#f1c232"/><circle cx="18" cy="12" r="5" fill="#58b96b"/><path d="M16 14h4v16h-4z" fill="#58b96b"/><circle cx="25" cy="13" r="6" fill="#3f8be8"/><path d="M23 15h4v17h-4z" fill="#3f8be8"/><circle cx="25" cy="11" r="1.700" fill="#fff"/></svg></div>
    <div class="d run"><svg viewBox="0 0 38 38"><rect width="38" height="38" rx="9" fill="#c9ccce"/><rect x="2" y="2" width="34" height="34" rx="7" fill="#1e1f20"/><path d="M7 8l4 2.500L7 13M13 14h6" fill="none" stroke="#fff" stroke-width="1.400"/></svg></div>
    <div class="d run"><svg viewBox="0 0 38 38"><rect width="38" height="38" rx="9" fill="#fafafa"/><path d="M12 6h19v13H12z" fill="#3d9ae0"/><path d="M22 6h9v8h-9z" fill="#63bdf0"/><path d="M10 18h22v14H10z" fill="#2877cc"/><rect x="4" y="12" width="14" height="15" rx="1.500" fill="#1b5fb8"/><circle cx="11" cy="19.500" r="3.500" fill="none" stroke="#fff" stroke-width="1.800"/></svg></div>
    <div class="d run"><svg viewBox="0 0 38 38"><rect width="38" height="38" rx="9" fill="#fafafa"/><circle cx="20" cy="9" r="5" fill="#7078dc"/><circle cx="29" cy="11" r="3.500" fill="#5259c0"/><path d="M15 15h18v9a6 6 0 0 1-6 7h-5a8 8 0 0 1-7-8z" fill="#6d75da"/><rect x="5" y="12" width="15" height="15" rx="2" fill="#434ab4"/><path d="M9 16h7M12.500 16v8" stroke="#fff" stroke-width="2"/></svg></div>
    <div class="d run"><svg viewBox="0 0 38 38"><rect width="38" height="38" rx="9" fill="#f2f3f5"/><path d="M3 4h32v15H3z" fill="#9db8e6"/><path d="M3 19h32v13H3z" fill="#1d2f58"/><path d="M3 27h20v6H3z" fill="#cbb79d"/><path d="M18 20h18l-1 17H20z" fill="#b9bcbf"/><path d="M18 19h18v5H18z" fill="#26282b"/></svg></div>
    <div class="d run"><svg viewBox="0 0 38 38"><rect width="38" height="38" rx="9" fill="#bfc8da"/><circle cx="19" cy="19" r="14" fill="#fff"/><circle cx="19" cy="19" r="11.500" fill="#fff" stroke="#2f6be0" stroke-width="3.500"/><path d="M16.500 12h5v14h-5z" fill="#17191c"/></svg></div>
    <hr>
    <div class="d"><svg viewBox="0 0 38 38"><rect x="3" y="1" width="32" height="36" rx="3" fill="#f7f7f7"/><path d="M3 4a3 3 0 0 1 3-3h26a3 3 0 0 1 3 3v10H3z" fill="#d54a42"/><text x="19" y="12" text-anchor="middle" class="dt" font-size="8" font-weight="600" fill="#f6c9c4">JUN</text><text x="19" y="28" text-anchor="middle" class="dt" font-size="15" fill="#222">5</text><path d="M13 32h12M14 35h10" stroke="#bbb"/></svg></div>
    <div class="d"><svg viewBox="0 0 44 38" class="th"><rect x="0" y="2" width="44" height="34" fill="#20232b"/><path d="M18 6h8M12 10h20" stroke="#6c7080" stroke-width="1.500"/><path d="M8 18h4M9 26h3" stroke="#b08a68" stroke-width="4"/><path d="M16 18h4M24 18h4" stroke="#4a6a5c" stroke-width="4"/><path d="M32 18h4" stroke="#7a62a8" stroke-width="4"/><path d="M1 5h3" stroke="#d8453c" stroke-width="3"/><path d="M40 7h4" stroke="#e8b33c" stroke-width="3"/><rect x="28" y="24" width="16" height="15" rx="4" fill="#fff"/><use href="#chromelogo" x="30" y="25.500" width="12" height="12"/></svg></div>
    <div class="d"><svg viewBox="0 0 44 38" class="th"><rect x="0" y="2" width="44" height="29" fill="#f3f0f8"/><path d="M0 3h44" stroke="#3b3348" stroke-width="2"/><path d="M12 10h9M12 14h8M12 18h9M12 22h8M23 10h9M23 14h8M23 18h10" stroke="#b9bcc6"/><rect x="28" y="22" width="16" height="15" rx="4" fill="#fff"/><use href="#chromelogo" x="30" y="23.500" width="12" height="12"/></svg></div>
    <div class="d"><svg viewBox="0 0 44 38" class="th"><rect x="0" y="0" width="44" height="32" fill="#2b2b2e"/><rect x="16" y="3" width="20" height="26" fill="#f4f4f4"/><path d="M2 4h4v4H2zM2 11h4v4H2z" fill="#fff"/><path d="M19 8h14M19 12h12M19 16h14M19 20h11" stroke="#bbb"/><rect x="29" y="21" width="14" height="13" rx="3" fill="#a9b8d8"/><path d="M30 28h12v5H30z" fill="#26334f"/></svg></div>
    <div class="d trash"><svg viewBox="0 0 38 46"><path d="M3 6h32l-5 34c-1 4-21 4-22 0z" fill="url(#gTrash)"/><ellipse cx="19" cy="7" rx="16" ry="4" fill="#55585a"/><path d="M6 7l5-5 5 3 5-4 5 4 5-3 2 6c-6 3-20 3-27-1z" fill="#dfe2e4"/><path d="M10 4l3 3M20 3l3 4M27 4l2 3" stroke="#8c4a3c" stroke-width="1.500"/></svg></div>
  </div>
</div>
</body>
</html>
```
FILE: styles.css
```css
*{box-sizing:border-box}
body{margin:0;width:2940px;height:1912px;overflow:hidden;font-family:Inter,"Liberation Sans",sans-serif}
h1,h2,h3,p{margin:0}
.defs{position:absolute}
.desktop{position:relative;width:2940px;height:1912px;overflow:hidden;background:linear-gradient(180deg,#14170f 0,#1b1d14 8%,#20251a 25%,#2b2a18 38%,#5a3a2a 44%,#8a5a40 50%,#5c3b28 60%,#3a3320 66%,#2a3a1c 74%,#1f3416 85%,#16240f 100%)}
.win{position:absolute;overflow:hidden}
.ic{width:32px;height:32px;flex:none;fill:none;stroke:currentColor;stroke-width:2;stroke-linecap:round;stroke-linejoin:round}
.ic.big{width:48px;height:48px}
.ic.sm{width:24px;height:24px}

/* background windows */
.w-plum{left:2700px;top:108px;width:240px;height:97px;background:#33232b;border-top:2px solid #6a5c61;border-radius:0 22px 0 0}
.w-plum i{position:absolute;left:0;right:0;bottom:0;height:17px;background:#4a2833}
.w-black{left:2700px;top:205px;width:240px;height:1255px;background:#141414;border-top:2px solid #4c4c4c}
.w-silver{left:2700px;top:1457px;width:240px;height:455px;background:linear-gradient(180deg,#6f7275,#8d9093 60%,#b4b5b7)}
.w-edge{left:2700px;top:311px;width:238px;height:1064px;background:#191917;border:2px solid #3a3a38;border-radius:0 18px 18px 0}
.w-char{left:2700px;top:266px;width:230px;height:1600px;background:linear-gradient(90deg,#222 80%,#2e2e2e);border:2px solid #515151;border-radius:0 24px 24px 0;box-shadow:0 0 0 1px #000}
.w-grayleft{left:68px;top:210px;width:200px;height:1701px;background:#8c8f92;border-radius:0 0 0 24px}
.w-dark1{left:83px;top:76px;width:2566px;height:120px;background:#252626;border:2px solid #636363;border-radius:18px 20px 0 0}
.w-dark1 .dim{position:absolute;left:13px;top:14px;width:24px;height:24px;border-radius:50%;background:#4a4a4a}
.w-dark2{left:70px;top:130px;width:300px;height:175px;background:#212222;border-top:2px solid #606060;border-radius:0}

.back{left:140px;top:81px;width:2752px;height:1798px;background:#0c0f14;border:2px solid #3c3b3e;border-top-color:#75625e;border-radius:22px 22px 20px 20px;box-shadow:0 0 0 1px #0a0707}
.tabstrip{display:flex;align-items:center;position:relative}
.backstrip{height:173px;padding:0 0 95px 52px;background:linear-gradient(180deg,#372624 0 70px,#5c403e 90px)}
.lights{display:flex;gap:16px;flex:none}
.lights i{width:24px;height:24px;border-radius:50%}
.lights .r{background:#ec6a5e}.lights .y{background:#f4bf4f}.lights .g{background:#61c554}
.dimlights i{background:#4f403f}
.dimlights{margin:4px 34px 0 -12px}
.bt,.ft{position:relative;flex:none;height:32px;display:flex;align-items:center}
.bt svg,.ft svg,.fav{width:32px;height:32px;flex:none}
.bt{width:120px;padding-left:20px}
.bt.wide{width:122px}
.bt::after,.ft::after{content:"";position:absolute;right:0;top:0;width:4px;height:32px;border-radius:2px;background:#433534}
.ft::after{background:#4a3528}
.bt.nosep::after,.ft.nosep::after{display:none}
.bt span{margin-left:17px;width:30px;overflow:hidden;white-space:nowrap;font-size:23.500px;line-height:32px;letter-spacing:-.6px;color:#dab8b3;-webkit-mask-image:linear-gradient(90deg,#000 45%,transparent)}
.bt .inner,.ft .inner{width:28px;height:28px;margin:0 2px}
.bt .dash,.ft .dash{position:absolute;left:15px;top:-5px;width:42px;height:42px;color:#8b5d3f}
.bt .dash{color:#8a5b56}
.bt .reddot{position:absolute;left:39px;top:3px;width:9px;height:9px;border-radius:50%;background:#e0352f}
.bactive{flex:none;position:relative;align-self:flex-start;margin:11px 0 0 4px;width:110px;height:56px;border-radius:18px 18px 0 0;background:#4f3533;display:flex;align-items:center;padding:0 0 0 16px;gap:20px}
.x{width:16px;height:16px;fill:none;stroke:#f1d9cc;stroke-width:2.600}
.bactive .x{stroke:#e0c3be}
.plus{width:21px;height:21px;fill:none;stroke:#f1d3c2;stroke-width:2.600}
.backstrip .plus{margin-left:27px;stroke:#d8bab6}

.front{left:82px;top:149px;width:2804px;height:1780px;background:#2b1a10;border:2px solid #0c0805;border-top-color:#1a0f0a;border-radius:24px 24px 0 0}
.frontstrip{height:79px;padding:0 0 3px 42px;border-top:2px solid #83705f;border-radius:22px 22px 0 0;background:#2b1a10}
.frontstrip .lights{margin-right:34px}
.ft{width:94px;padding-left:20px}
.ft.wide{width:96px}
.ft span{margin-left:17px;width:4px;overflow:hidden;font-size:22px;line-height:32px;color:#c8a892;opacity:.75}
.ft .red{color:#d03025}.ft .faint{opacity:.3}
.factive{flex:none;position:relative;align-self:flex-end;width:82px;margin:0 8px -3px 4px;height:67px;border-radius:18px 18px 0 0;background:#4a3629}
.factive::before,.factive::after{content:"";position:absolute;bottom:0;width:22px;height:22px}
.factive::before{left:-22px;background:radial-gradient(circle at 0 0,transparent 21.500px,#4a3629 22px)}
.factive::after{right:-22px;background:radial-gradient(circle at 100% 0,transparent 21.500px,#4a3629 22px)}
.factive .x{position:absolute;left:42px;top:19px}
.frontstrip .plus{margin-left:21px}

.toolbar{height:94px;display:flex;align-items:center;background:#4a3629;border-radius:18px 18px 0 0;border-bottom:2px solid #55483f;padding-left:32px}
.navbtns{display:flex;gap:48px;width:206px}
.navbtns svg{width:24px;height:24px;fill:none;stroke:#e6c2ac;stroke-width:2.600}
.navbtns .off{stroke:#8b7060}
.omnibox{width:1814px;height:72px;border:4px solid #f6b48c;border-radius:36px;display:flex;align-items:center;padding:0 30px 0 20px;background:#4a3527}
.tune{width:25px;height:25px;fill:none;stroke:#eed3c4;stroke-width:2.500}
.url{margin-left:26px;font-size:28px;letter-spacing:.1px;color:#f4ded3;white-space:nowrap}
.url em{font-style:normal;color:#ccb5a8}
.star{margin-left:auto;width:33px;height:33px;fill:none;stroke:#e2c4b3;stroke-width:2.500}
.tools{display:flex;align-items:center;flex:1;padding-left:34px}
.tools svg{flex:none;fill:none;stroke:#e6c2ac;stroke-width:3}
.tools .fill{fill:#e6c2ac;stroke:none}
.t-puz{width:34px;height:34px}
.tsep{width:4px;height:32px;border-radius:2px;background:#6a4f3f}
.t-puz+.tsep{margin:0 34px}
.t-lens{width:36px;height:32px}
.t-lens+.tsep{margin:0 36px 0 34px}
.t-leaf{width:31px;height:31px}
.tools .avatar{width:40px;height:40px;margin-left:37px;stroke:none}
.update{margin-left:24px;width:354px;height:68px;border-radius:34px;background:#693814;display:flex;align-items:center;justify-content:space-between;padding:0 29px 0 24px;color:#ffdcc6;font-size:26px;letter-spacing:-.3px;font-weight:500;white-space:nowrap}
.kebab{display:flex;flex-direction:column;gap:5px}
.kebab b{width:6px;height:6px;border-radius:50%;background:#ffdcc6}

/* web page */
.page{position:relative;height:1588px;background:#f9fafc;overflow:hidden}
.nav{height:130px;background:#fff;border-bottom:2px solid #e5e7eb;padding:0 184px;display:flex;align-items:center;position:relative}
.brand{display:flex;align-items:center;gap:24px;width:862px;font-size:31.500px;font-weight:600;letter-spacing:-.2px;color:#111827}
.logo{width:64px;height:64px;border-radius:24px;background:#3763e4;color:#fff;font-size:27px;display:flex;align-items:center;justify-content:center}
.links{display:flex;gap:64px;font-size:27.500px;font-weight:500;letter-spacing:0;color:#374151;padding-top:3px}
.links .on{color:#3763e4}
.actions{margin-left:auto;display:flex;align-items:center;color:#030712;padding-right:23px}
.bell{position:relative;margin:0 56px 0 80px;height:32px}
.bell b{position:absolute;left:33px;top:-29px;width:32px;height:32px;border-radius:50%;background:#d9453f;color:#fff;font-size:22px;font-weight:500;text-align:center;line-height:32px}
.av{width:64px;height:64px;border-radius:50%;background:#f1f4f9;font-size:25px;font-weight:600;text-align:center;line-height:64px}
.av2{margin-left:56px;font-size:27px;font-weight:600;width:20px}
.hero{height:218px;background:#fff;border-bottom:2px solid #e2e6ee;box-shadow:0 2px 5px rgba(0,0,0,.06);padding-top:49px;position:relative}
.wrap{width:1728px;margin:0 auto}
h1{font-size:47px;line-height:64px;letter-spacing:-.850px;font-weight:700;color:#111827;margin-bottom:8px}
.hero p{font-size:31.500px;line-height:48px;letter-spacing:-.450px;color:#4b5563}
.main{padding-top:48px;display:flex;flex-direction:column;gap:48px}
.card{background:#fff;border:2px solid #e2e6ef;border-radius:24px;box-shadow:0 2px 4px rgba(0,0,0,.05)}
.filter{height:348px;padding:48px}
h2{display:flex;align-items:center;gap:16px;height:48px;font-size:46.500px;font-weight:600;letter-spacing:-2px;color:#030712}
h2 span{padding-top:2px}
.filters{display:flex;align-items:flex-start;gap:32px;margin-top:48px;font-size:27.500px;letter-spacing:-.150px;color:#030712}
.input,.select,.vgrid{background:#f9fafc;border:2px solid #e2e6ef;border-radius:22px}
.input{width:584px;height:80px;display:flex;align-items:center;padding-left:22px;gap:26px;color:#64708a}
.input .ic{color:#9ca3af}
.input span{padding-top:1px}
.select{width:384px;height:80px;display:flex;align-items:center;justify-content:space-between;padding:0 24px}
.select .ic{color:#808289}
.views{display:flex;gap:16px}
.vlist{width:80px;height:72px;border-radius:22px;background:#4991ea;color:#fff;display:flex;align-items:center;justify-content:center}
.vgrid{width:84px;height:72px;display:flex;align-items:center;justify-content:center}
.found{margin-top:32px;font-size:27.500px;line-height:40px;letter-spacing:-.080px;color:#4b5563}
.events{height:1000px}
.event{display:flex;gap:32px;padding:48px;height:708px;border-bottom:2px solid #f3f4f6}
.date{width:160px;height:160px;flex:none;border:2px solid #bfd7fb;border-radius:24px;background:linear-gradient(135deg,#eff6ff,#dbe7fb);color:#3763e4;display:flex;flex-direction:column;align-items:center;justify-content:center;font-size:24px;line-height:32px;padding-top:2px}
.date .mon{font-weight:500;letter-spacing:.600px;margin-bottom:4px}
.date b{font-size:39px;line-height:48px;color:#2340a8}
.date .dow{font-size:23.500px;margin-top:4px;line-height:32px}
h3{font-size:35.500px;line-height:56px;letter-spacing:-.5px;font-weight:600;color:#111827;position:relative;top:1px}
.tag{display:block;width:120px;height:44px;border-radius:22px;background:#f2f3f5;font-size:23.500px;line-height:45px;font-weight:600;letter-spacing:-.1px;text-align:center;color:#1f2937;margin-top:16px}
.meta{display:flex;align-items:center;gap:16px;height:40px;font-size:27.500px;letter-spacing:-.2px;color:#4b5563;margin-top:16px}
.meta .ic{color:#9ca3af}
.time{margin-top:48px;font-weight:500;letter-spacing:.150px}
.desc{font-size:27.500px;line-height:46px;letter-spacing:-.2px;color:#374151;margin-top:32px}
.stats{display:flex;align-items:center;gap:32px;height:48px;margin-top:32px;font-size:23.500px;color:#6b7280}
.pill{display:flex;align-items:center;gap:8px;height:48px;width:197px;padding-left:16px;border-radius:24px;background:#eff5fe;letter-spacing:.350px}
.likes{display:flex;align-items:center;gap:8px}
.btns{display:flex;gap:16px;margin-top:24px}
button{font:500 27.500px Inter,"Liberation Sans",sans-serif;letter-spacing:.120px;height:72px;border:0;background:none;padding:0 24px;display:flex;align-items:center;gap:8px;color:#030712;white-space:nowrap}
.mute{color:#6b7280}
.save{letter-spacing:-.3px}
.outline{width:125px;justify-content:center;border:2px solid #e2e6ef;border-radius:22px;background:#f9fafc;padding:0}
.details{gap:24px}
.dockshade{position:absolute;left:0;top:0;width:100px;height:100%;background:linear-gradient(90deg,rgba(30,35,45,.09),rgba(30,35,45,.03) 50%,rgba(30,35,45,0));-webkit-mask-image:linear-gradient(180deg,rgba(0,0,0,.6),#000 25%)}

/* system menu bar */
.menubar{position:absolute;left:0;top:0;width:2940px;height:74px;background:linear-gradient(90deg,#50534a,#4d5043 35%,#47493d 60%,#424841 80%,#3f4642);display:flex;align-items:center;color:#fff;padding:0 34px 2px 38px;font-size:25.500px;font-weight:500}
.apple{width:34px;height:34px;fill:#fff}
.menus{display:flex;gap:42px;margin-left:36px;letter-spacing:-.330px}
.menus b{font-weight:700;letter-spacing:.2px}
.status{display:flex;align-items:center;margin-left:auto}
.status svg{flex:none}
.s1{width:36px;height:32px}
.s2{width:34px;height:34px;margin-left:39px}
.s3{width:34px;height:34px;margin-left:36px}
.s4{width:30px;height:30px;margin-left:32px}
.us{width:44px;height:32px;border:2.500px solid #eceeea;border-radius:7px;font-size:21px;line-height:27px;text-align:center;margin-left:42px}
.s5{width:36px;height:26px;margin-left:42px}
.s6{width:52px;height:26px;margin-left:37px}
.s7{width:36px;height:26px;margin-left:36px}
.s8{width:27px;height:27px;margin-left:38px}
.s9{width:28px;height:28px;margin-left:39px}
.clock{display:flex;justify-content:space-between;margin-left:37px;white-space:nowrap;letter-spacing:.350px;color:#eceeea;width:264px}

/* dock */
.dock{position:absolute;left:10px;top:106px;width:69px;height:1773px;border:2px solid rgba(160,165,160,.38);border-radius:18px;background:linear-gradient(180deg,#1e231c 0,#23231b 12%,#33291d 22%,#5f4a33 34%,#5a4529 42%,#3b2e20 54%,#2b2522 63%,#29291f 70%,#22301d 78%,#2a3a20 90%,#363d26 100%);display:flex;flex-direction:column;padding:4px 0 0 16px}
.d{position:relative;height:50.450px;width:38px;display:flex;align-items:center;flex:none}
.d svg{width:38px;height:38px;overflow:visible}
.d .th{width:44px;margin-left:-3px;flex:none}
.d.trash svg{height:44px;margin-top:-4px}
.d.run::before{content:"";position:absolute;left:-14px;top:22px;width:6px;height:6px;border-radius:50%;background:#a5a79c}
.d b{position:absolute;left:25px;top:-1px;width:18px;height:18px;border-radius:50%;background:#dd4a3e;color:#fff;font-size:11px;font-weight:500;line-height:18px;text-align:center}
.dt{font-family:Inter,sans-serif}
.dock hr{flex:none;width:48px;height:2px;border:0;background:rgba(190,190,180,.5);margin:10.500px 0 10.500px -8px}
```
